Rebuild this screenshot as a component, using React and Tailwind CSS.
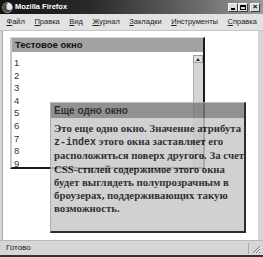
import React from "react";

const ui = { fontFamily: '"Liberation Sans", Arial, sans-serif' };
const serif = { fontFamily: '"Liberation Serif", "Times New Roman", serif' };
const mono = { fontFamily: '"Liberation Mono", "Courier New", monospace' };

function FoxIcon() {
  return (
    <svg width="11" height="11" viewBox="0 0 16 16">
      <circle cx="8" cy="8" r="7.5" fill="#e6e6e6" />
      <path
        d="M8 1a7 7 0 1 0 6.9 8.2c-.8 1.6-2.6 2.8-4.6 2.6-2.6-.2-4.3-2.6-3.7-4.9.3-1 1-1.8 2-2-1.2-.2-2.3.4-2.8 1.2C5.6 4 7 2.4 8.8 2 8.5 1.4 8.3 1 8 1z"
        fill="#4a4a4a"
      />
    </svg>
  );
}

function WinBtn({ children }) {
  return (
    <div className="w-[10px] h-[9px] bg-[#dcdcdc] border border-t-[#f4f4f4] border-l-[#f4f4f4] border-r-[#404040] border-b-[#404040] flex items-center justify-center text-black">
      {children}
    </div>
  );
}

function Menu({ label }) {
  return (
    <span className="text-[7.5px] text-[#222] leading-none">
      <span className="underline">{label[0]}</span>
      {label.slice(1)}
    </span>
  );
}

export default function App() {
  const nums = [1, 2, 3, 4, 5, 6, 7, 8, 9];
  return (
    <div className="w-[263px] h-[257px] bg-[#d6d6d6] flex flex-col overflow-hidden" style={ui}>
      {/* title bar */}
      <div className="h-[14px] flex items-center bg-[linear-gradient(90deg,#141414_0%,#2a2a2a_35%,#6a6a6a_75%,#9a9a9a_100%)] pl-[2px] pr-[3px]">
        <FoxIcon />
        <span className="ml-[2px] text-white font-bold text-[7.5px] leading-none">Mozilla Firefox</span>
        <div className="ml-auto flex items-center">
          <WinBtn>
            <div className="w-[4px] h-[1.5px] bg-black mt-[4px]" />
          </WinBtn>
          <WinBtn>
            <div className="w-[6px] h-[5px] border border-black border-t-2" />
          </WinBtn>
          <div className="w-[2px]" />
          <WinBtn>
            <span className="text-[8px] font-bold leading-none">×</span>
          </WinBtn>
        </div>
      </div>

      {/* menu bar */}
      <div className="h-[17px] bg-[#e2e2e2] flex items-center pl-[6.5px] gap-[9.5px] border-b border-[#c4c4c4]">
        {["Файл", "Правка", "Вид", "Журнал", "Закладки", "Инструменты", "Справка"].map((m) => (
          <Menu key={m} label={m} />
        ))}
        <div className="ml-auto mr-[4px] w-[2px] h-[11px] border-l border-r border-l-white border-r-[#999]" />
      </div>

      {/* content */}
      <div className="flex-1 flex pl-[2px] pr-[5px]">
        <div className="flex-1 bg-white relative border-l border-[#a8a8a8] overflow-hidden">
          {/* first window */}
          <div className="ml-[7px] mt-[6px] w-[195px] h-[132px] flex flex-col border-l-2 border-t border-r-2 border-b-2 border-l-[#c8c8c8] border-t-[#d8d8d8] border-r-[#1a1a1a] border-b-[#1a1a1a]">
            <div className="h-[14px] bg-[#a2a2a2] flex items-center pl-[3px] shrink-0">
              <span className="text-[9.5px] font-bold text-[#111] leading-none">Тестовое окно</span>
            </div>
            <div className="flex-1 flex overflow-hidden">
              <div className="flex-1 pt-[5px] pl-[2px] overflow-hidden">
                {nums.map((n) => (
                  <div key={n} className="text-[9.5px] leading-[12.6px] text-[#333]">
                    {n}
                  </div>
                ))}
              </div>
              <div className="w-[10px] flex flex-col pt-[3px]">
                <div className="h-[8px] bg-[#e2e2e2] border border-[#9a9a9a] flex items-center justify-center">
                  <div className="w-0 h-0 border-l-[2.5px] border-r-[2.5px] border-b-[3px] border-l-transparent border-r-transparent border-b-[#222]" />
                </div>
                <div className="flex-1 bg-[#d6d6d6] border-l border-[#b0b0b0]" />
              </div>
            </div>
          </div>

          {/* second window */}
          <div className="absolute left-[47px] top-[71px] w-[196px] h-[131px] flex flex-col opacity-[0.82] bg-[#c8c8c8] border-l border-t border-r-2 border-b-2 border-l-[#9a9a9a] border-t-[#b0b0b0] border-r-black border-b-black">
            <div className="h-[15px] bg-[#7a7a7a] flex items-center pl-[3px] shrink-0">
              <span className="text-[10px] font-bold text-black leading-none">Еще одно окно</span>
            </div>
            <div className="pt-[4px] pl-[3px] text-[10.8px] font-bold leading-[13.2px] text-black whitespace-nowrap" style={serif}>
              Это еще одно окно. Значение атрибута
              <br />
              <span style={mono} className="text-[10px]">z-index</span> этого окна заставляет его
              <br />
              расположиться поверх другого. За счет
              <br />
              CSS-стилей содержимое этого окна
              <br />
              будет выглядеть полупрозрачным в
              <br />
              броузерах, поддерживающих такую
              <br />
              возможность.
            </div>
          </div>
        </div>
      </div>

      {/* status bar */}
      <div className="h-[15px] flex items-center border-t border-[#b8b8b8] pl-[6px] pr-[2px] relative">
        <span className="text-[8px] text-[#222] leading-none">Готово</span>
        <div className="ml-auto w-[1px] h-[11px] bg-[#aaa] mr-[12px]" />
        <svg className="absolute right-[2px] bottom-[1px]" width="10" height="10" viewBox="0 0 10 10">
          <path d="M9 2 L2 9 M9 5 L5 9 M9 8 L8 9" stroke="#777" strokeWidth="1" />
          <path d="M10 3 L3 10 M10 6 L6 10" stroke="#fff" strokeWidth="0.8" />
        </svg>
      </div>
      <div className="h-[2px] bg-[#333] shrink-0" />
    </div>
  );
}
